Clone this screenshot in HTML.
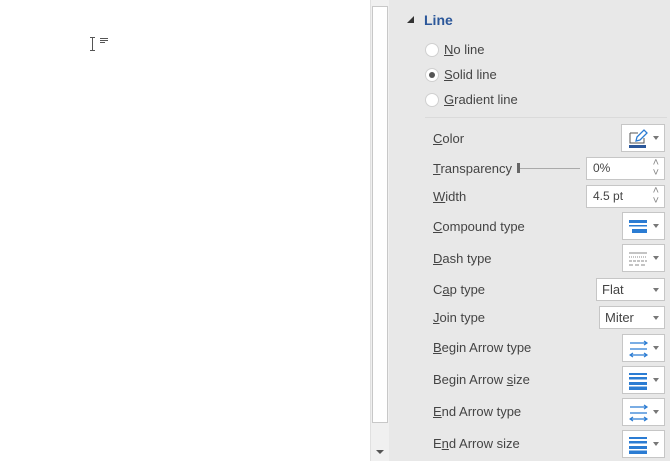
<!DOCTYPE html>
<html><head><meta charset="utf-8"><style>
*{margin:0;padding:0;box-sizing:border-box}
body{width:670px;height:461px;overflow:hidden;background:#fff;font-family:"Liberation Sans",sans-serif;font-size:13px;color:#444;position:relative}
.a{position:absolute}
.panel{left:389px;top:0;width:281px;height:461px;background:#e8e8e8}
.track{left:370px;top:0;width:19px;height:461px;background:#f0f0f0;border-left:1px solid #e0e0e0}
.thumb{left:372px;top:6px;width:16px;height:417px;background:#fff;border:1px solid #c8c8c8}
.lbl{left:433px;font-size:13px;color:#444}
u{text-decoration:underline}
.radio{width:14px;height:14px;border-radius:50%;background:#fff;border:1px solid #d0d0d0;left:425px}
.btn{background:#fff;border:1px solid #c6c6c6}
.dd{position:absolute;right:5px;top:50%;margin-top:-2px;width:0;height:0;border-left:3.5px solid transparent;border-right:3.5px solid transparent;border-top:4px solid #777}
.txt{left:11px;top:3px;position:absolute;font-size:13px;color:#444}
.spin{font-size:11px;color:#888}
</style></head><body>
<div class="a" style="left:92px;top:37px;width:1px;height:14px;background:#555"></div>
<div class="a" style="left:90px;top:37px;width:5px;height:1px;background:#555"></div>
<div class="a" style="left:90px;top:50px;width:5px;height:1px;background:#555"></div>
<div class="a" style="left:100px;top:38px;width:8px;height:1px;background:#555"></div>
<div class="a" style="left:100px;top:40px;width:8px;height:1px;background:#555"></div>
<div class="a" style="left:100px;top:42px;width:5px;height:1px;background:#555"></div>

<div class="a track"></div>
<div class="a thumb"></div>
<div class="a" style="left:376px;top:450px;width:0;height:0;border-left:4px solid transparent;border-right:4px solid transparent;border-top:4px solid #555"></div>
<div class="a panel"></div>

<div class="a" style="left:407px;top:16px;width:0;height:0;border-left:7px solid transparent;border-bottom:7px solid #333"></div>
<div class="a" style="left:424px;top:12px;font-weight:bold;color:#2b579a;font-size:14px">Line</div>

<div class="a radio" style="top:43px"></div>
<div class="a lbl" style="left:444px;top:42px"><u>N</u>o line</div>
<div class="a radio" style="top:68px"></div>
<div class="a" style="left:429px;top:72px;width:6px;height:6px;border-radius:50%;background:#555"></div>
<div class="a lbl" style="left:444px;top:67px"><u>S</u>olid line</div>
<div class="a radio" style="top:93px"></div>
<div class="a lbl" style="left:444px;top:92px"><u>G</u>radient line</div>
<div class="a" style="left:425px;top:117px;width:242px;height:1px;background:#dadada"></div>

<div class="a lbl" style="top:131px"><u>C</u>olor</div>
<div class="a btn" style="left:621px;top:124px;width:44px;height:28px">
<svg class="a" style="left:6px;top:4px" width="20" height="20" viewBox="0 0 20 20"><path d="M2 4h8M2 4v10h14V9" fill="none" stroke="#555" stroke-width="1"/><path d="M8 12l1-4 7-7 3 3-7 7z" fill="none" stroke="#2b7cd3" stroke-width="1.3"/><rect x="1" y="16" width="17" height="3" fill="#2b579a"/></svg><div class="dd"></div></div>

<div class="a lbl" style="top:161px"><u>T</u>ransparency</div>
<div class="a" style="left:517px;top:163px;width:3px;height:10px;background:#666"></div>
<div class="a" style="left:520px;top:168px;width:60px;height:1px;background:#aaa"></div>
<div class="a btn" style="left:586px;top:157px;width:79px;height:23px"><div class="txt" style="left:6px;font-size:12px">0%</div><div class="a spin" style="right:5px;top:-1px">˄</div><div class="a spin" style="right:5px;top:9px">˅</div></div>

<div class="a lbl" style="top:189px"><u>W</u>idth</div>
<div class="a btn" style="left:586px;top:185px;width:79px;height:23px"><div class="txt" style="left:6px;font-size:12px">4.5 pt</div><div class="a spin" style="right:5px;top:-1px">˄</div><div class="a spin" style="right:5px;top:9px">˅</div></div>

<div class="a lbl" style="top:219px"><u>C</u>ompound type</div>
<div class="a btn" style="left:622px;top:212px;width:43px;height:28px">
<svg class="a" style="left:6px;top:6px" width="20" height="16"><rect x="0" y="1" width="18" height="3" fill="#2b7cd3"/><rect x="0" y="6" width="18" height="1.5" fill="#2b7cd3"/><rect x="3" y="10" width="15" height="4" fill="#2b7cd3"/></svg><div class="dd"></div></div>

<div class="a lbl" style="top:251px"><u>D</u>ash type</div>
<div class="a btn" style="left:622px;top:244px;width:43px;height:28px">
<svg class="a" style="left:6px;top:6px" width="20" height="16"><path d="M0 2h18" stroke="#888"/><path d="M0 6h18" stroke="#888" stroke-dasharray="1 1"/><path d="M0 10h18" stroke="#888" stroke-dasharray="3 1"/><path d="M0 14h18" stroke="#888" stroke-dasharray="4 2"/></svg><div class="dd"></div></div>

<div class="a lbl" style="top:282px">C<u>a</u>p type</div>
<div class="a btn" style="left:596px;top:278px;width:69px;height:23px"><div class="txt" style="left:5px;top:3px">Flat</div><div class="dd"></div></div>

<div class="a lbl" style="top:310px"><u>J</u>oin type</div>
<div class="a btn" style="left:599px;top:306px;width:66px;height:23px"><div class="txt" style="left:5px;top:3px">Miter</div><div class="dd"></div></div>

<div class="a lbl" style="top:340px"><u>B</u>egin Arrow type</div>
<div class="a btn" style="left:622px;top:334px;width:43px;height:28px">
<svg class="a" style="left:6px;top:5px" width="20" height="18"><g fill="none" stroke="#2b7cd3" stroke-width="1.2"><path d="M1 3h17M15 1l3 2-3 2"/><path d="M1 9h17"/><path d="M1 15h17M4 13l-3 2 3 2M15 13l3 2-3 2"/></g></svg><div class="dd"></div></div>

<div class="a lbl" style="top:372px">Begin Arrow <u>s</u>ize</div>
<div class="a btn" style="left:622px;top:366px;width:43px;height:28px">
<svg class="a" style="left:6px;top:5px" width="20" height="18"><rect x="0" y="1" width="18" height="2" fill="#2b7cd3"/><rect x="0" y="5" width="18" height="2.5" fill="#2b7cd3"/><rect x="0" y="10" width="18" height="3" fill="#2b7cd3"/><rect x="0" y="14.5" width="18" height="3.5" fill="#2b7cd3"/></svg><div class="dd"></div></div>

<div class="a lbl" style="top:404px"><u>E</u>nd Arrow type</div>
<div class="a btn" style="left:622px;top:398px;width:43px;height:28px">
<svg class="a" style="left:6px;top:5px" width="20" height="18"><g fill="none" stroke="#2b7cd3" stroke-width="1.2"><path d="M1 3h17M15 1l3 2-3 2"/><path d="M1 9h17"/><path d="M1 15h17M4 13l-3 2 3 2M15 13l3 2-3 2"/></g></svg><div class="dd"></div></div>

<div class="a lbl" style="top:436px">E<u>n</u>d Arrow size</div>
<div class="a btn" style="left:622px;top:430px;width:43px;height:28px">
<svg class="a" style="left:6px;top:5px" width="20" height="18"><rect x="0" y="1" width="18" height="2" fill="#2b7cd3"/><rect x="0" y="5" width="18" height="2.5" fill="#2b7cd3"/><rect x="0" y="10" width="18" height="3" fill="#2b7cd3"/><rect x="0" y="14.5" width="18" height="3.5" fill="#2b7cd3"/></svg><div class="dd"></div></div>
</body></html>
